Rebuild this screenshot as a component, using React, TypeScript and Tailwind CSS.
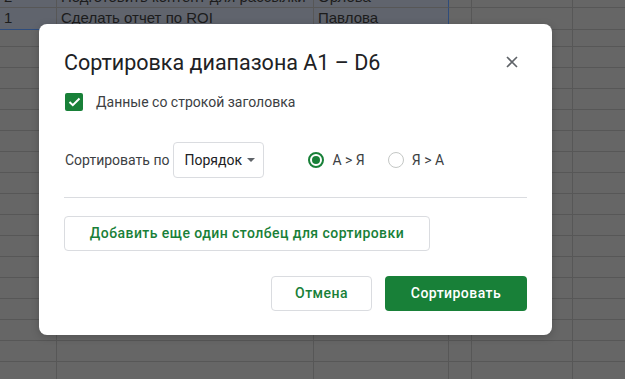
import React from "react";

const cols = [57, 257, 135, 23, 101, 80];

const rows: { h: number; cells?: string[] }[] = [
  { h: 21, cells: ["2", "Подготовить контент для рассылки", "Орлова"] },
  { h: 22, cells: ["1", "Сделать отчет по ROI", "Павлова"] },
  ...Array.from({ length: 17 }, (_, i) => ({ h: i === 0 ? 17 : 21 })),
];

function Sheet() {
  return (
    <div className="flex flex-col -mt-[13px]">
      {rows.map((row, r) => {
        const selected = r < 2;
        return (
          <div key={r} className="flex" style={{ height: row.h }}>
            {cols.map((w, c) => {
              const inSel = selected && c < 3;
              return (
                <div
                  key={c}
                  className={
                    "shrink-0 flex items-center px-[4px] text-[15px] text-[#1c1c1c] whitespace-nowrap overflow-hidden border-b border-r " +
                    (inSel ? "bg-[#60646d] " : "bg-[#666666] ") +
                    (r === 1 && c < 3 ? "border-b-[#2e4c7c] " : "border-b-[#575757] ") +
                    (selected && c === 2 ? "border-r-[#2e4c7c]" : "border-r-[#575757]")
                  }
                  style={{ width: w, fontFamily: '"Liberation Sans", Arial, sans-serif' }}
                >
                  {row.cells?.[c] ?? ""}
                </div>
              );
            })}
          </div>
        );
      })}
    </div>
  );
}

function Radio({ on, label }: { on: boolean; label: string }) {
  return (
    <div className="flex items-center gap-[8px]">
      <span
        className={
          "w-[16px] h-[16px] rounded-full border-2 flex items-center justify-center " +
          (on ? "border-[#188038]" : "border-[#c4c7c5] border-[1.5px]")
        }
      >
        {on && <span className="w-[8px] h-[8px] rounded-full bg-[#188038]" />}
      </span>
      <span className="text-[14px] text-[#3c4043]">{label}</span>
    </div>
  );
}

export default function App() {
  return (
    <div
      className="relative w-[625px] h-[379px] overflow-hidden bg-[#666666]"
      style={{ fontFamily: 'Roboto, "Noto Sans", Arial, sans-serif' }}
    >
      <Sheet />

      <div className="absolute left-[39px] top-[24px] w-[513px] h-[311px] rounded-[8px] bg-white shadow-[0_2px_8px_rgba(0,0,0,0.2)] flex flex-col px-[25px]">
        {/* Header */}
        <div className="mt-[26px] h-[26px] flex items-center justify-between">
          <h1 className="text-[21.5px] leading-[26px] text-[#202124]">Сортировка диапазона A1 – D6</h1>
          <svg width="12" height="12" viewBox="0 0 12 12" className="mr-[9px] -mt-[2px]">
            <path d="M1 1L11 11M11 1L1 11" stroke="#5f6368" strokeWidth="1.6" />
          </svg>
        </div>

        {/* Header row checkbox */}
        <div className="mt-[17px] h-[18px] flex items-center gap-[13px] pl-[1px]">
          <span className="w-[18px] h-[18px] rounded-[2px] bg-[#188038] flex items-center justify-center">
            <svg width="13" height="10" viewBox="0 0 13 10">
              <path d="M1.5 5L4.8 8.2L11.5 1.5" stroke="white" strokeWidth="2" fill="none" />
            </svg>
          </span>
          <span className="text-[14px] text-[#3c4043]">Данные со строкой заголовка</span>
        </div>

        {/* Sort by */}
        <div className="mt-[31px] h-[36px] flex items-center pl-[1px]">
          <span className="text-[14px] text-[#3c4043]">Сортировать по</span>
          <div className="ml-[4px] h-[36px] w-[91px] rounded-[4px] border border-[#dadce0] flex items-center justify-between pl-[10px] pr-[8px]">
            <span className="text-[14px] text-[#202124]">Порядок</span>
            <svg width="8" height="4" viewBox="0 0 8 4">
              <path d="M0 0L4 4L8 0Z" fill="#5f6368" />
            </svg>
          </div>
          <div className="ml-[44px] flex items-center gap-[23px]">
            <Radio on label="А > Я" />
            <Radio on={false} label="Я > А" />
          </div>
        </div>

        <div className="mt-[19px] h-px bg-[#dadce0]" />

        <button className="mt-[18px] h-[35px] w-[366px] rounded-[4px] border border-[#dadce0] text-[14px] font-medium tracking-[0.45px] text-[#188038]">
          Добавить еще один столбец для сортировки
        </button>

        <div className="mt-[25px] flex justify-end gap-[13px]">
          <button className="h-[35px] w-[101px] rounded-[4px] border border-[#dadce0] text-[14px] font-medium tracking-[0.45px] text-[#188038]">
            Отмена
          </button>
          <button className="h-[35px] w-[142px] rounded-[4px] bg-[#188038] text-[14px] font-medium tracking-[0.45px] text-white">
            Сортировать
          </button>
        </div>
      </div>
    </div>
  );
}
